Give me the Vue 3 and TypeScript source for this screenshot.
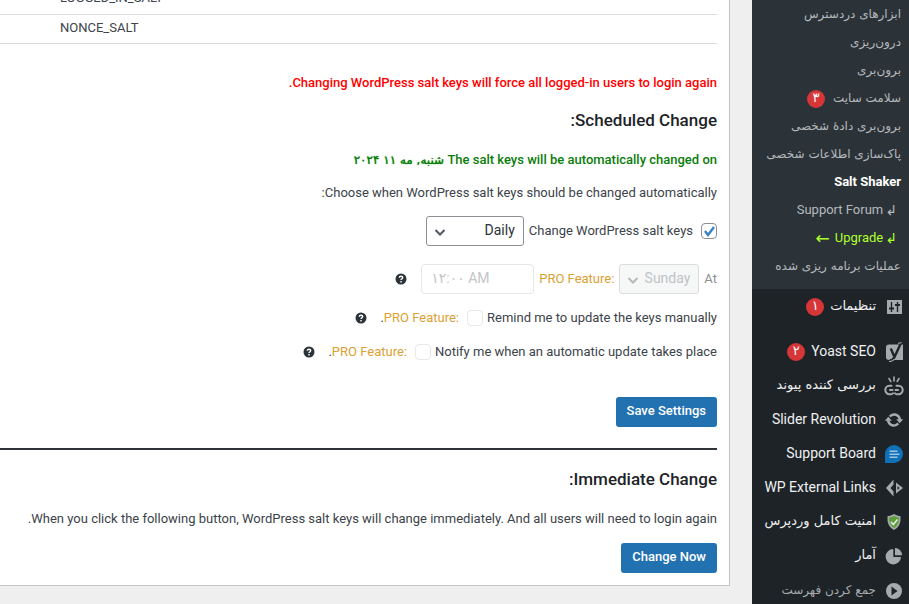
<script setup lang="ts">
import { ref } from 'vue'

interface SubItem {
  label: string
  fa?: boolean
  badge?: string
  kind?: 'current' | 'nested' | 'upgrade'
}

interface MenuItem {
  label: string
  icon: string
  fa?: boolean
  badge?: string
  gap?: boolean
}

const subItems: SubItem[] = [
  { label: 'ابزارهای دردسترس', fa: true },
  { label: 'درون‌ریزی', fa: true },
  { label: 'برون‌بری', fa: true },
  { label: 'سلامت سایت', fa: true, badge: '۳' },
  { label: 'برون‌بری دادهٔ شخصی', fa: true },
  { label: 'پاک‌سازی اطلاعات شخصی', fa: true },
  { label: 'Salt Shaker', kind: 'current' },
  { label: 'Support Forum', kind: 'nested' },
  { label: 'Upgrade', kind: 'upgrade' },
  { label: 'عملیات برنامه ریزی شده', fa: true },
]

const menuItems: MenuItem[] = [
  { label: 'تنظیمات', icon: 'settings', fa: true, badge: '۱', gap: true },
  { label: 'Yoast SEO', icon: 'yoast', badge: '۲' },
  { label: 'بررسی کننده پیوند', icon: 'link', fa: true },
  { label: 'Slider Revolution', icon: 'revolution' },
  { label: 'Support Board', icon: 'board' },
  { label: 'WP External Links', icon: 'external' },
  { label: 'امنیت کامل وردپرس', icon: 'shield', fa: true },
  { label: 'آمار', icon: 'stats', fa: true },
]

const saltKeys = ['LOGGED_IN_SALT', 'NONCE_SALT']

const autoChange = ref(true)
const frequency = ref('daily')
</script>

<template>
  <div class="admin" dir="rtl">
    <nav class="sidebar">
      <ul class="submenu">
        <li v-for="item in subItems" :key="item.label">
          <a href="#" class="sub-link" :class="item.kind">
            <span v-if="item.kind === 'nested' || item.kind === 'upgrade'" class="turn">↲</span>
            <span :class="{ fa: item.fa }">{{ item.label }}</span>
            <span v-if="item.kind === 'upgrade'" class="arrow">←</span>
            <span v-if="item.badge" class="badge">{{ item.badge }}</span>
          </a>
        </li>
      </ul>
      <ul class="menu">
        <li v-for="item in menuItems" :key="item.label" :class="{ gap: item.gap }">
          <a href="#" class="menu-link">
            <svg class="icon" viewBox="0 0 20 20" aria-hidden="true">
              <g v-if="item.icon === 'settings'">
                <path fill="#a7aaad" d="M3 3h15v14H3z" />
                <path stroke="#1d2327" stroke-width="1.4" fill="none" d="M7.500 5v10M13.500 5v10" />
                <path fill="#1d2327" d="M5 10.500h5v2H5zM11 7h5v2h-5z" />
              </g>
              <g v-else-if="item.icon === 'yoast'">
                <path fill="#a7aaad" d="M5 2.500H19V18H5Q2 18 2 15V5.500Q2 2.500 5 2.500z" />
                <path stroke="#1d2327" stroke-width="2.400" fill="none" d="M6.800 6.500l3.200 7.500M17 1l-6.500 14q-1.500 3.500-5 3.500" />
                <path stroke="#a7aaad" stroke-width="1.200" fill="none" d="M14 1.500L17.500 0.500M5 19.500q4 0 5.500-2.500" />
              </g>
              <g v-else-if="item.icon === 'link'" fill="none" stroke="#a7aaad" stroke-width="2" stroke-linecap="round">
                <path d="M7.500 9.800H5.500a4.200 4.200 0 0 0 0 8.400h1.500q1.300 0 2-1M12.500 9.800h2a4.200 4.200 0 0 1 0 8.400h-1.500q-1.300 0-2-1M6 14h2.500M11.500 14H14" />
                <path stroke-width="1.600" d="M10 1v4M5 2.500l1.800 3M15 2.500l-1.800 3" />
              </g>
              <g v-else-if="item.icon === 'revolution'">
                <path fill="#a7aaad" d="M10.200 3.280c3.530 0 6.430 2.610 6.920 6h2.080l-3.500 4-3.500-4h2.320c-.45-1.970-2.210-3.450-4.320-3.450-1.450 0-2.730.71-3.540 1.780L4.950 5.660C6.230 4.200 8.110 3.280 10.200 3.280zm-.4 13.440c-3.520 0-6.430-2.610-6.920-6H.8l3.500-4 3.500 4H5.480c.45 1.970 2.210 3.450 4.320 3.450 1.450 0 2.730-.71 3.540-1.780l1.710 1.950c-1.280 1.460-3.150 2.380-5.250 2.380z" />
              </g>
              <g v-else-if="item.icon === 'board'">
                <path fill="#0f70b7" d="M10 1a9 9 0 0 1 0 18H1v-9a9 9 0 0 1 9-9z" />
                <path stroke="#9ac4e3" stroke-width="1.400" d="M5.500 7.300h8M5.500 10.300h10M5.500 13.300h8" />
              </g>
              <g v-else-if="item.icon === 'external'" fill="#a7aaad">
                <path d="M9.500 1.500v5L6.500 10l3 3.500v5L2 10z" />
                <path d="M12 4.500l7 5.500-7 5.500z" />
                <path fill="#1d2327" d="M13.500 8l2 2-2 2z" />
              </g>
              <g v-else-if="item.icon === 'shield'">
                <path fill="#a7aaad" d="M10 2q3 2 6.500 2.200Q17.500 14 10 18 2.500 14 3.500 4.200 7 4 10 2z" />
                <path fill="#5e9f3c" d="M10 4q2.500 1.400 5 1.600.300 7.400-5 10.600-5.300-3.200-5-10.600Q7.500 5.400 10 4z" />
                <path fill="none" stroke="#e6efe2" stroke-width="1.500" d="M7 10l2.300 2.500L13.500 7.500" />
              </g>
              <g v-else fill="#a7aaad">
                <path d="M9.300 3v8H17a7.700 7.700 0 1 1-7.700-8z" />
                <path d="M11 2a7.200 7.200 0 0 1 7 7.300h-7z" />
              </g>
            </svg>
            <span :class="{ fa: item.fa }">{{ item.label }}</span>
            <span v-if="item.badge" class="badge">{{ item.badge }}</span>
          </a>
        </li>
      </ul>
      <button type="button" class="collapse">
        <svg class="icon" viewBox="0 0 20 20" aria-hidden="true">
          <circle cx="10" cy="10" r="8" fill="#a7aaad" />
          <path fill="#1d2327" d="M7.500 5.500v9l6-4.500z" />
        </svg>
        <span class="fa">جمع کردن فهرست</span>
      </button>
    </nav>

    <main class="content">
      <section class="card">
        <table class="keys">
          <tbody>
            <tr v-for="key in saltKeys" :key="key">
              <td>{{ key }}</td>
            </tr>
          </tbody>
        </table>

        <p class="warning">Changing WordPress salt keys will force all logged-in users to login again.</p>

        <h2>Scheduled Change:</h2>
        <p class="notice">The salt keys will be automatically changed on <span class="fa">شنبه, مه ۱۱ ۲۰۲۴</span></p>
        <p class="intro">Choose when WordPress salt keys should be changed automatically:</p>

        <form @submit.prevent>
          <div class="row schedule">
            <input id="auto" v-model="autoChange" type="checkbox" class="check" />
            <label for="auto">Change WordPress salt keys</label>
            <select v-model="frequency" class="select daily" aria-label="Frequency">
              <option value="daily">Daily</option>
              <option value="weekly">Weekly</option>
              <option value="monthly">Monthly</option>
            </select>
          </div>

          <div class="row time">
            <label for="day" class="muted">At</label>
            <select id="day" class="select day" disabled>
              <option>Sunday</option>
            </select>
            <span class="pro" dir="ltr">PRO Feature:</span>
            <input class="clock" type="text" dir="ltr" value="۱۲:۰۰ AM" disabled aria-label="Time" />
            <svg class="help" viewBox="0 0 12 12" aria-hidden="true">
              <circle cx="6" cy="6" r="5.500" fill="#2c3338" />
              <path d="M4.300 4.800q0-1.600 1.700-1.600t1.700 1.300q0 .8-.9 1.300-.8.400-.8 1.100" fill="none" stroke="#fff" stroke-width="1.400" />
              <path d="M5.300 8h1.400v1.400H5.300z" fill="#fff" />
            </svg>
          </div>

          <div class="row option">
            <label for="remind">Remind me to update the keys manually</label>
            <input id="remind" type="checkbox" class="check" disabled />
            <span class="pro"><bdi>PRO Feature:</bdi><i>.</i></span>
            <svg class="help" viewBox="0 0 12 12" aria-hidden="true">
              <circle cx="6" cy="6" r="5.500" fill="#2c3338" />
              <path d="M4.300 4.800q0-1.600 1.700-1.600t1.700 1.300q0 .8-.9 1.300-.8.400-.8 1.100" fill="none" stroke="#fff" stroke-width="1.400" />
              <path d="M5.300 8h1.400v1.400H5.300z" fill="#fff" />
            </svg>
          </div>

          <div class="row option">
            <label for="notify">Notify me when an automatic update takes place</label>
            <input id="notify" type="checkbox" class="check" disabled />
            <span class="pro"><bdi>PRO Feature:</bdi><i>.</i></span>
            <svg class="help" viewBox="0 0 12 12" aria-hidden="true">
              <circle cx="6" cy="6" r="5.500" fill="#2c3338" />
              <path d="M4.300 4.800q0-1.600 1.700-1.600t1.700 1.300q0 .8-.9 1.300-.8.400-.8 1.100" fill="none" stroke="#fff" stroke-width="1.400" />
              <path d="M5.300 8h1.400v1.400H5.300z" fill="#fff" />
            </svg>
          </div>

          <button type="submit" class="button save">Save Settings</button>
        </form>

        <hr />

        <h2>Immediate Change:</h2>
        <p class="immediate">When you click the following button, WordPress salt keys will change immediately. And all users will need to login again.</p>
        <button type="button" class="button">Change Now</button>
      </section>
    </main>
  </div>
</template>

<style>
body {
  background: #efefef;
}
</style>

<style scoped>
.admin {
  display: flex;
  min-height: 100vh;
  max-height: 100vh;
  overflow: hidden;
  background: #efefef;
  color: #3c434a;
  font-family: Roboto, "DejaVu Sans", sans-serif;
  font-size: 13px;
  line-height: 20px;
}

.fa {
  font-family: "DejaVu Sans", sans-serif;
  font-size: 12px;
}

/* Sidebar */
.sidebar {
  flex: 0 0 157px;
  background: #1d2327;
}

ul {
  margin: 0;
  padding: 0;
  list-style: none;
}

.submenu {
  padding-bottom: 9px;
  background: #2c3338;
}

.sub-link {
  display: flex;
  align-items: center;
  gap: 8px;
  height: 28px;
  padding: 0 8px;
  color: #b4b9be;
  text-decoration: none;
  white-space: nowrap;
}

.sub-link.current {
  color: #fff;
  font-weight: 700;
}

.sub-link.nested,
.sub-link.upgrade {
  gap: 2px;
  padding-right: 12px;
}

.sub-link.upgrade {
  color: #adff2f;
}

.turn {
  font-size: 14px;
}

.arrow {
  margin-right: 3px;
  font-size: 17px;
}

.menu-link,
.collapse {
  display: flex;
  align-items: center;
  gap: 8px;
  height: 34px;
  padding: 0 5px;
  color: #f0f0f1;
  font-size: 14px;
  text-decoration: none;
  white-space: nowrap;
}

.menu-link .fa {
  font-size: 13px;
}

.gap {
  padding-bottom: 11px;
}

.collapse {
  width: 100%;
  margin-top: 1px;
  border: 0;
  background: none;
  color: #a7aaad;
  font-family: inherit;
}

.icon {
  flex: none;
  width: 20px;
  height: 20px;
  margin-top: 2px;
}

.badge {
  flex: none;
  width: 18px;
  height: 18px;
  margin-top: 2px;
  border-radius: 50%;
  background: #d63638;
  color: #fff;
  font-family: "DejaVu Sans", sans-serif;
  font-size: 13px;
  line-height: 16px;
  text-align: center;
}

.menu-link .badge {
  margin-right: -2px;
}

/* Content */
.content {
  flex: 1;
  min-width: 0;
  padding-right: 22px;
}

.card {
  margin-top: -15px;
  padding: 0 12px 12px 0;
  border-right: 1px solid #c3c4c7;
  border-bottom: 1px solid #c3c4c7;
  background: #fff;
}

.keys {
  width: 100%;
  margin-bottom: 29px;
  border-collapse: collapse;
}

.keys td {
  box-sizing: border-box;
  height: 29px;
  padding: 0 0 2px 60px;
  border-bottom: 1px solid #dcdcde;
  direction: ltr;
  text-align: left;
}

p {
  margin: 0;
}

h2 {
  margin: 0;
  color: #1d2327;
  font-size: 17px;
  font-weight: 500;
  line-height: 24px;
}

.warning {
  margin-bottom: 15px;
  color: #f00;
  font-weight: 500;
}

.notice {
  margin: 18px 0 13px;
  color: #0a7d0a;
  font-weight: 500;
}

.notice .fa {
  font-weight: 400;
  text-shadow: 0 0 1px currentColor;
}

.intro {
  margin-bottom: 13px;
}

.row {
  display: flex;
  align-items: center;
  gap: 5px;
}

.schedule {
  margin-bottom: 18px;
}

.time {
  margin-bottom: 14px;
}

.option {
  gap: 4px;
  height: 20px;
  margin-bottom: 14px;
}

.muted {
  color: #8c8f94;
}

.pro {
  color: #dba133;
}

.option .pro {
  margin-right: 4px;
}

.pro i {
  color: #3c434a;
  font-style: normal;
}

.check {
  appearance: none;
  width: 16px;
  height: 16px;
  margin: 0;
  border: 1px solid #8c8f94;
  border-radius: 4px;
  background: #fff;
}

.check:checked {
  background: #fff url("data:image/svg+xml,%3Csvg xmlns='http://www.w3.org/2000/svg' viewBox='0 0 14 14'%3E%3Cpath d='M3 7l3 4 6-8' fill='none' stroke='%233582c4' stroke-width='2.400'/%3E%3C/svg%3E") center / 14px no-repeat;
}

.check:disabled {
  border-color: #e8e8ea;
}

.schedule label {
  margin-right: 3px;
}

.select {
  appearance: none;
  box-sizing: border-box;
  height: 30px;
  padding: 0 8px 2px 24px;
  border: 1px solid #8c8f94;
  border-radius: 3px;
  background: #fff url("data:image/svg+xml,%3Csvg xmlns='http://www.w3.org/2000/svg' viewBox='0 0 12 12'%3E%3Cpath d='M1.500 4L6 8.500 10.500 4' fill='none' stroke='%2350575e' stroke-width='2'/%3E%3C/svg%3E") 7px 9px / 12px no-repeat;
  color: #2c3338;
  font-family: inherit;
  font-size: 14px;
}

.daily {
  width: 98px;
}

.day {
  width: 80px;
  border-color: #dcdcde;
  background-color: #f6f7f7;
  background-image: url("data:image/svg+xml,%3Csvg xmlns='http://www.w3.org/2000/svg' viewBox='0 0 12 12'%3E%3Cpath d='M1.500 4L6 8.500 10.500 4' fill='none' stroke='%23b5b8bc' stroke-width='2'/%3E%3C/svg%3E");
  color: #bfc3c7;
  opacity: 1;
}

.clock {
  box-sizing: border-box;
  width: 113px;
  height: 30px;
  padding: 0 9px 2px;
  border: 1px solid #e6e7e8;
  border-radius: 4px;
  background: #fff;
  color: #c3c5c8;
  font-family: inherit;
  font-size: 14px;
}

.help {
  flex: none;
  width: 12px;
  height: 12px;
  margin-right: 9px;
}

.button {
  height: 30px;
  padding: 0 11px 2px;
  border: 0;
  border-radius: 3px;
  background: #2271b1;
  color: #fff;
  font-family: inherit;
  font-size: 13px;
  font-weight: 500;
}

.save {
  display: block;
  margin-top: 35px;
}

hr {
  height: 2px;
  margin: 21px 0 17px;
  border: 0;
  background: #2f3236;
}

.immediate {
  margin: 18px 0 14px;
}
</style>
